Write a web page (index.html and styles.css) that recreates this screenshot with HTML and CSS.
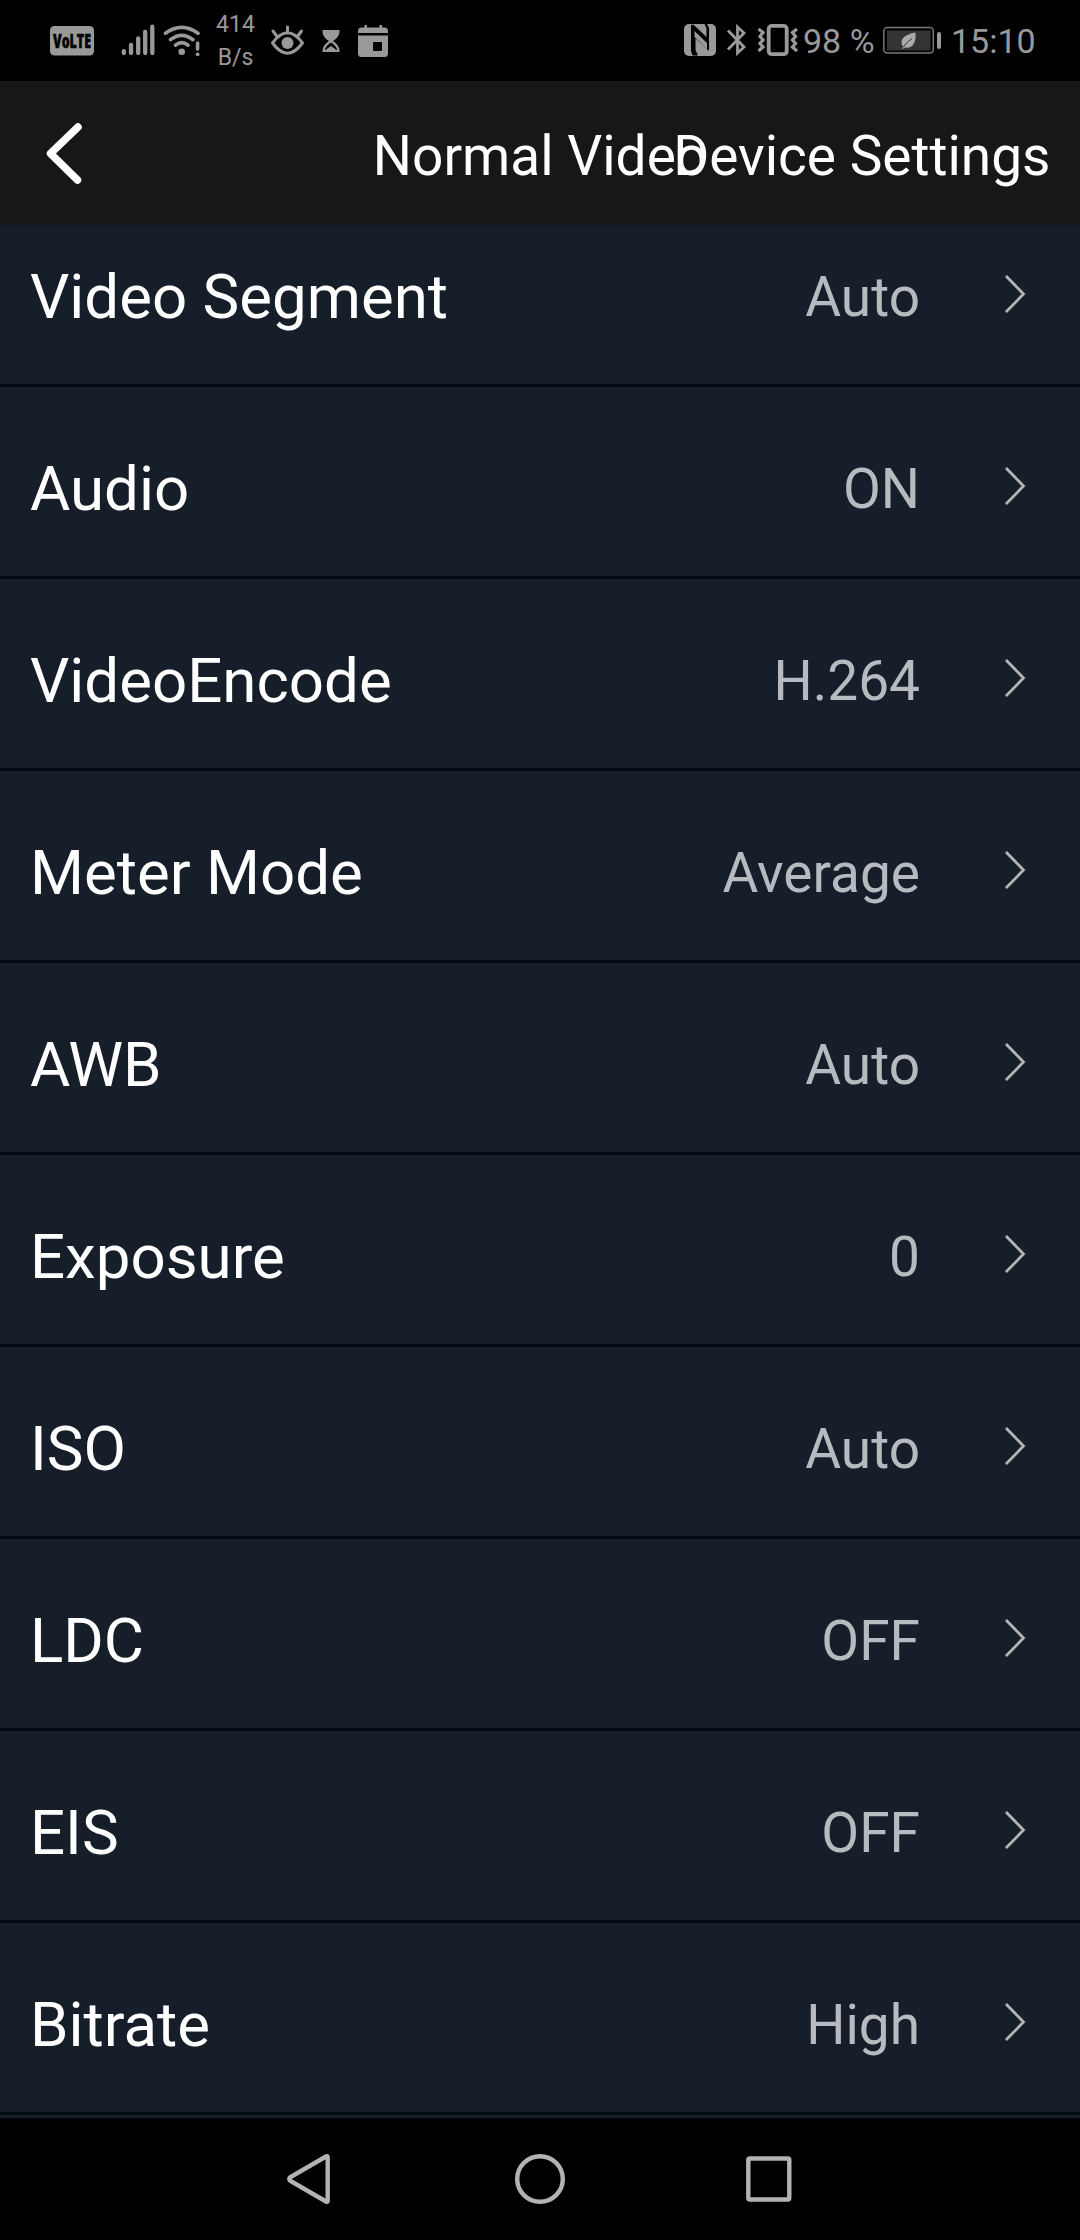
FILE: index.html
```html
<!DOCTYPE html>
<html lang="en">
<head>
<meta charset="utf-8">
<title>Device Settings</title>
<link rel="stylesheet" href="styles.css">
</head>
<body>
<svg class="defs" width="0" height="0" aria-hidden="true">
  <symbol id="chevron" viewBox="0 0 24 42"><path d="M3 3L20.500 21L3 39" fill="none" stroke="#b4b4b4" stroke-width="2.800"/></symbol>
</svg>
<div class="screen">
  <div class="status">
    <svg class="volte" width="44" height="81" viewBox="50 0 44 81"><rect x="50" y="26" width="44" height="29.500" rx="4.500"/><text x="53" y="47.800" textLength="38" lengthAdjust="spacingAndGlyphs">VoLTE</text></svg>
    <svg class="signal" width="34" height="81" viewBox="121 0 34 81"><g class="line" stroke-width="4.300"><path d="M123.800 51.200V53M131 45V53M138.200 38.500V53M145.200 32V53M152.300 26.700V53"/></g></svg>
    <svg class="wifi" width="38" height="81" viewBox="163 0 38 81"><g class="line" stroke-width="3.600"><path d="M165.500 33.300Q181.700 21.500 198 33.300M170.500 39.700Q181.700 31 193 39.700M175.500 45.200Q181.700 40 188 45.200"/><path d="M197.600 43V49"/></g><circle cx="181.700" cy="51.700" r="3.300"/><circle cx="197.600" cy="54.300" r="1.900"/></svg>
    <div class="speed"><span>414</span><span>B/s</span></div>
    <svg class="eye" width="35" height="81" viewBox="270 0 35 81"><g class="line" stroke-width="3"><path d="M272.500 43Q287.500 22.500 302.500 43Q287.500 63.500 272.500 43ZM287.500 27V33M273 31L277 36.500M301.500 31L297.500 36.500"/></g><circle cx="287.500" cy="43" r="6"/></svg>
    <svg class="hourglass" width="18" height="81" viewBox="322 0 18 81"><path d="M322.500 30H339.500V32C339 36.500 336 39 333 41C336 43 339 46 339.500 50V52H322.500V50C323 46 326 43 329 41C326 39 323 36.500 322.500 32Z"/><path class="cut" d="M331 42.500C327.500 44.500 325 47.500 324.800 50.500L331 46L337.200 50.500C337 47.500 334.500 44.500 331 42.500Z"/></svg>
    <svg class="calendar" width="30" height="81" viewBox="358 0 30 81"><path d="M358 33V31Q358 27.500 361.500 27.500H364.500V25H367V27.500H379.500V25H382V27.500H384.500Q388 27.500 388 31V33ZM358 35.500H388V53.500Q388 57 384.500 57H361.500Q358 57 358 53.500Z"/><rect class="cut" x="373" y="42" width="9" height="9" rx="1"/></svg>
    <svg class="nfc" width="32" height="81" viewBox="684 0 32 81"><rect x="684" y="24" width="32" height="32" rx="5"/><path class="cut" d="M691 25L693.300 24.500L706.500 37V28L704.500 24H707L709 28V51L705 47L695.500 38.500V50L698 55.500H692.500L691 51Z"/><path d="M694.500 31L707 43V49L694.500 37Z"/></svg>
    <svg class="bluetooth" width="21" height="81" viewBox="726 0 21 81"><path class="line miter" stroke-width="2.800" d="M728 30.500L744 47L737.500 53V27L744 33L728 49.500"/></svg>
    <svg class="vibrate" width="41" height="81" viewBox="757 0 41 81"><rect class="line" stroke-width="3.800" x="768.700" y="25.900" width="18" height="28.300" rx="3"/><path class="line miter" stroke-width="3.200" d="M758.500 29L763 32.500L760 36.500L763 40L760 43.500L763 47L758.500 51M797 29L792.500 32.500L795.500 36.500L792.500 40L795.500 43.500L792.500 47L797 51"/></svg>
    <span class="percent">98 %</span>
    <svg class="battery" width="58" height="81" viewBox="883 0 58 81"><rect class="shell" x="883.800" y="27.500" width="49.500" height="25.500" rx="3.500"/><rect class="charge" x="887" y="30.500" width="43.500" height="20"/><rect x="937" y="32" width="4" height="17" rx="2"/><path class="leaf" d="M915.500 32.500C908 34 902.500 36.500 901.500 41.500Q901 44.500 903 46.500L902 48.500H904L905 47.500C912 49 916.500 43 915.500 32.500Z"/><path class="vein" d="M903 47.500Q907 41.500 912 38.500"/></svg>
    <span class="time">15:10</span>
  </div>

  <header class="header">
    <svg class="back" width="44" height="70" viewBox="43 119 44 70"><path d="M78 127L50.500 153.500L77.500 180"/></svg>
    <h1 class="title">Normal Video</h1>
    <span class="crumb">Device Settings</span>
  </header>

  <main class="list">
    <div class="row"><span class="label">Video Segment</span><span class="value">Auto</span><svg class="chev"><use href="#chevron"/></svg></div>
    <div class="row"><span class="label">Audio</span><span class="value">ON</span><svg class="chev"><use href="#chevron"/></svg></div>
    <div class="row"><span class="label">VideoEncode</span><span class="value">H.264</span><svg class="chev"><use href="#chevron"/></svg></div>
    <div class="row"><span class="label">Meter Mode</span><span class="value">Average</span><svg class="chev"><use href="#chevron"/></svg></div>
    <div class="row"><span class="label">AWB</span><span class="value">Auto</span><svg class="chev"><use href="#chevron"/></svg></div>
    <div class="row"><span class="label">Exposure</span><span class="value">0</span><svg class="chev"><use href="#chevron"/></svg></div>
    <div class="row"><span class="label">ISO</span><span class="value">Auto</span><svg class="chev"><use href="#chevron"/></svg></div>
    <div class="row"><span class="label">LDC</span><span class="value">OFF</span><svg class="chev"><use href="#chevron"/></svg></div>
    <div class="row"><span class="label">EIS</span><span class="value">OFF</span><svg class="chev"><use href="#chevron"/></svg></div>
    <div class="row"><span class="label">Bitrate</span><span class="value">High</span><svg class="chev"><use href="#chevron"/></svg></div>
  </main>

  <nav class="nav">
    <svg width="50" height="60" viewBox="283 2149 50 60"><path d="M326 2156.500Q327.700 2155.500 327.700 2157.500V2200.500Q327.700 2202.500 326 2201.500L290.500 2181Q288 2179 290.500 2177Z"/></svg>
    <svg width="60" height="60" viewBox="510 2149 60 60"><circle cx="540" cy="2179" r="22.800"/></svg>
    <svg width="50" height="60" viewBox="744 2149 50 60"><rect x="748.300" y="2158.500" width="41" height="41" rx="1.500"/></svg>
  </nav>
</div>
</body>
</html>
```
FILE: styles.css
```css
* { box-sizing: border-box; }
body { margin: 0; background: #000; font-family: Roboto, "Liberation Sans", sans-serif; }
.defs { display: block; position: absolute; }
.screen { width: 1080px; height: 2240px; display: flex; flex-direction: column; overflow: hidden; }

/* Status bar */
.status { height: 81px; flex: none; display: flex; padding-left: 50px; color: #999; fill: #999; background: #000; }
.status svg { flex: none; display: block; }
.status .line { fill: none; stroke: #999; stroke-linecap: round; stroke-linejoin: round; }
.status .miter { stroke-linecap: butt; stroke-linejoin: miter; }
.status .cut { fill: #000; }
.volte text { fill: #000; stroke: #000; stroke-width: 0.5px; font: 800 19px "Open Sans", sans-serif; }
.signal { margin-left: 27px; }
.wifi { margin-left: 8px; }
.speed { margin-left: 14px; width: 41px; padding-top: 9px; display: flex; flex-direction: column; align-items: center; font-size: 23px; line-height: 32px; }
.speed span + span { padding-top: 1px; }
.eye { margin-left: 14px; }
.hourglass { margin-left: 17px; }
.calendar { margin-left: 18px; }
.nfc { margin-left: 296px; }
.bluetooth { margin-left: 10px; }
.vibrate { margin-left: 10px; }
.percent, .time { font-size: 34px; line-height: 82px; white-space: nowrap; }
.percent { margin-left: 5px; width: 75px; }
.battery { margin-left: 5px; }
.shell { fill: none; stroke: #777; stroke-width: 1.5px; }
.charge { fill: #333; }
.leaf { fill: #aaa; }
.vein { fill: none; stroke: #333; stroke-width: 1px; }
.time { margin-left: 10px; }

/* Header: the centred title runs under the right-aligned caption */
.header { height: 144px; flex: none; display: grid; grid-template-columns: 1fr; align-items: center; background: #161719; color: #fff; font-size: 55px; line-height: 64px; }
.header > * { grid-area: 1 / 1; }
.back { margin-left: 43px; margin-top: 1px; fill: none; stroke: #fff; stroke-width: 7.5px; stroke-linecap: round; stroke-linejoin: round; }
.title { margin: 6px 0 0; justify-self: center; font-size: inherit; font-weight: 400; }
.crumb { margin-top: 6px; justify-self: end; padding-right: 29.5px; }

/* Settings list, scrolled slightly past its first row's top */
.list { height: 1893px; flex: none; overflow: hidden; background: #151e29; }
.row { height: 192px; display: flex; align-items: center; padding: 9px 53px 0 30px; border-bottom: 3px solid #010911; }
.row:first-child { margin-top: -30px; }
.label { flex: 1; padding-top: 5px; color: #fff; font-size: 61.8px; line-height: 72px; }
.value { padding-top: 5px; color: #b7babf; font-size: 55px; line-height: 64px; }
.chev { width: 24px; height: 42px; flex: none; margin-left: 83px; }

/* Navigation bar */
.nav { height: 122px; flex: none; display: grid; grid-template-columns: 50px 60px 50px; column-gap: 177px; padding: 0 0 0 283px; align-items: center; background: #000; fill: none; stroke: #b3b3b3; stroke-width: 4.4px; }
.nav svg:last-child { margin-left: -3px; }
```
